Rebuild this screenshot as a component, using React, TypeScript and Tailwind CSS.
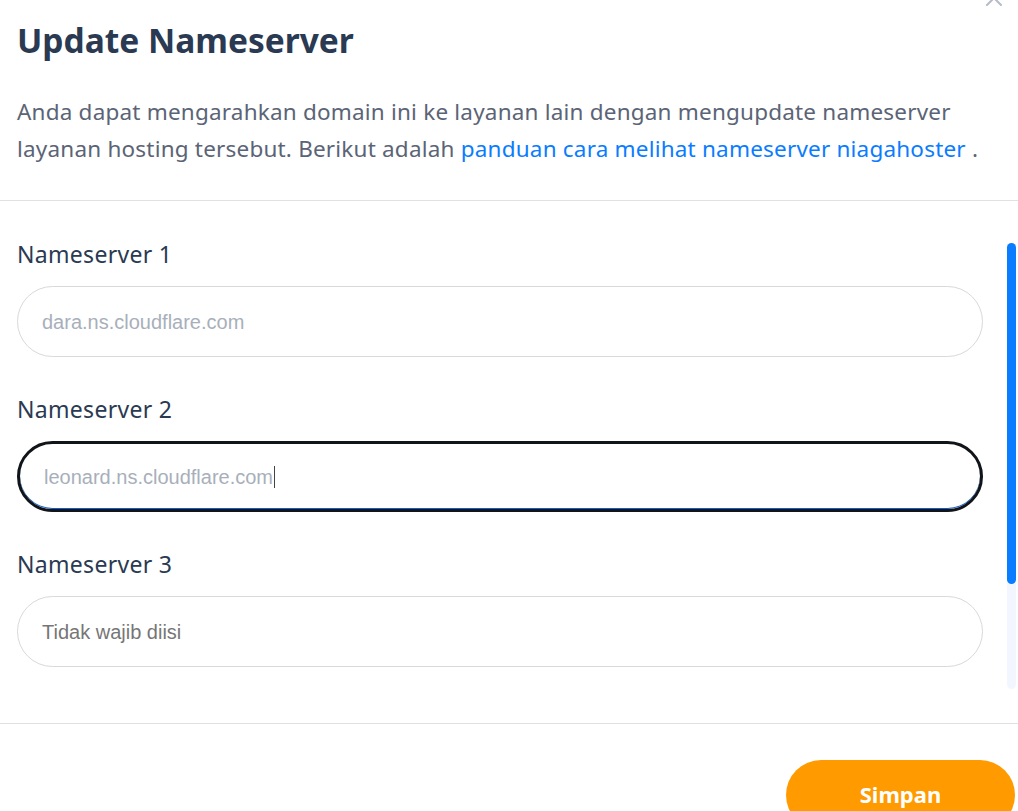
import React from "react";
import { X } from "lucide-react";

const fields = [
  { label: "Nameserver 1", value: "dara.ns.cloudflare.com", focused: false, optional: false },
  { label: "Nameserver 2", value: "leonard.ns.cloudflare.com", focused: true, optional: false },
  { label: "Nameserver 3", value: "", focused: false, optional: true },
];

const App: React.FC = () => {
  return (
    <div
      className="relative h-[811px] w-[1018px] overflow-hidden bg-white text-[#2c3a50]"
      style={{ fontFamily: '"Noto Sans", "Open Sans", sans-serif' }}
    >
      {/* close button, partly cut off at top */}
      <button className="absolute right-[10px] top-[-16px] text-[#b6bcc6]">
        <X className="h-7 w-7" strokeWidth={1.75} />
      </button>

      {/* Header */}
      <div className="px-[17px] pt-[18px]">
        <h1 className="text-[33.5px] font-bold leading-[44px] text-[#2a3a52]">
          Update Nameserver
        </h1>
        <p className="mt-[31px] text-[22.5px] leading-[37px] tracking-[0.2px] text-[#5b6476]">
          Anda dapat mengarahkan domain ini ke layanan lain dengan mengupdate nameserver
          <br />
          layanan hosting tersebut. Berikut adalah{" "}
          <a href="#" className="text-[#0a7cff]">
            panduan cara melihat nameserver niagahoster
          </a>{" "}
          .
        </p>
      </div>

      <div className="mt-[33px] border-t border-[#e1e1e4]" />

      {/* Body */}
      <div className="flex h-[522px]">
        <div className="w-[983px] pl-[17px] pt-[38px]">
          {fields.map((f) => (
            <div key={f.label} className="mb-[37px]">
              <label className="block text-[23px] leading-[30px] tracking-[0.3px] text-[#2a3a52]">
                {f.label}
              </label>
              <div
                className={`mt-[17px] flex h-[71px] items-center rounded-full px-[24px] ${
                  f.focused
                    ? "border-[3px] border-[#111418] shadow-[inset_0_-1px_0_#0a5fd0]"
                    : "border border-[#d9d9d9]"
                }`}
              >
                {f.optional ? (
                  <span
                    className="text-[20px] text-[#767676]"
                    style={{ fontFamily: '"Liberation Sans", Arial, sans-serif' }}
                  >
                    Tidak wajib diisi
                  </span>
                ) : (
                  <span
                    className="flex items-center text-[20px] text-[#a8afba]"
                    style={{ fontFamily: '"Liberation Sans", Arial, sans-serif' }}
                  >
                    {f.value}
                    {f.focused && <span className="ml-[1px] inline-block h-[22px] w-[1px] bg-[#444]" />}
                  </span>
                )}
              </div>
            </div>
          ))}
        </div>

        {/* scrollbar */}
        <div className="ml-[24px] mt-[42px] h-[446px] w-[9px] rounded-full bg-[#f2f7ff]">
          <div className="h-[341px] w-[9px] rounded-full bg-[#0a7cff]" />
        </div>
      </div>

      <div className="border-t border-[#e1e1e4]" />

      {/* Footer */}
      <div className="flex justify-end pt-[36px]">
        <button className="mr-[3px] h-[70px] w-[229px] rounded-full bg-[#ff9a00] pb-[2px] text-[22px] font-bold text-white">
          Simpan
        </button>
      </div>
    </div>
  );
};

export default App;
